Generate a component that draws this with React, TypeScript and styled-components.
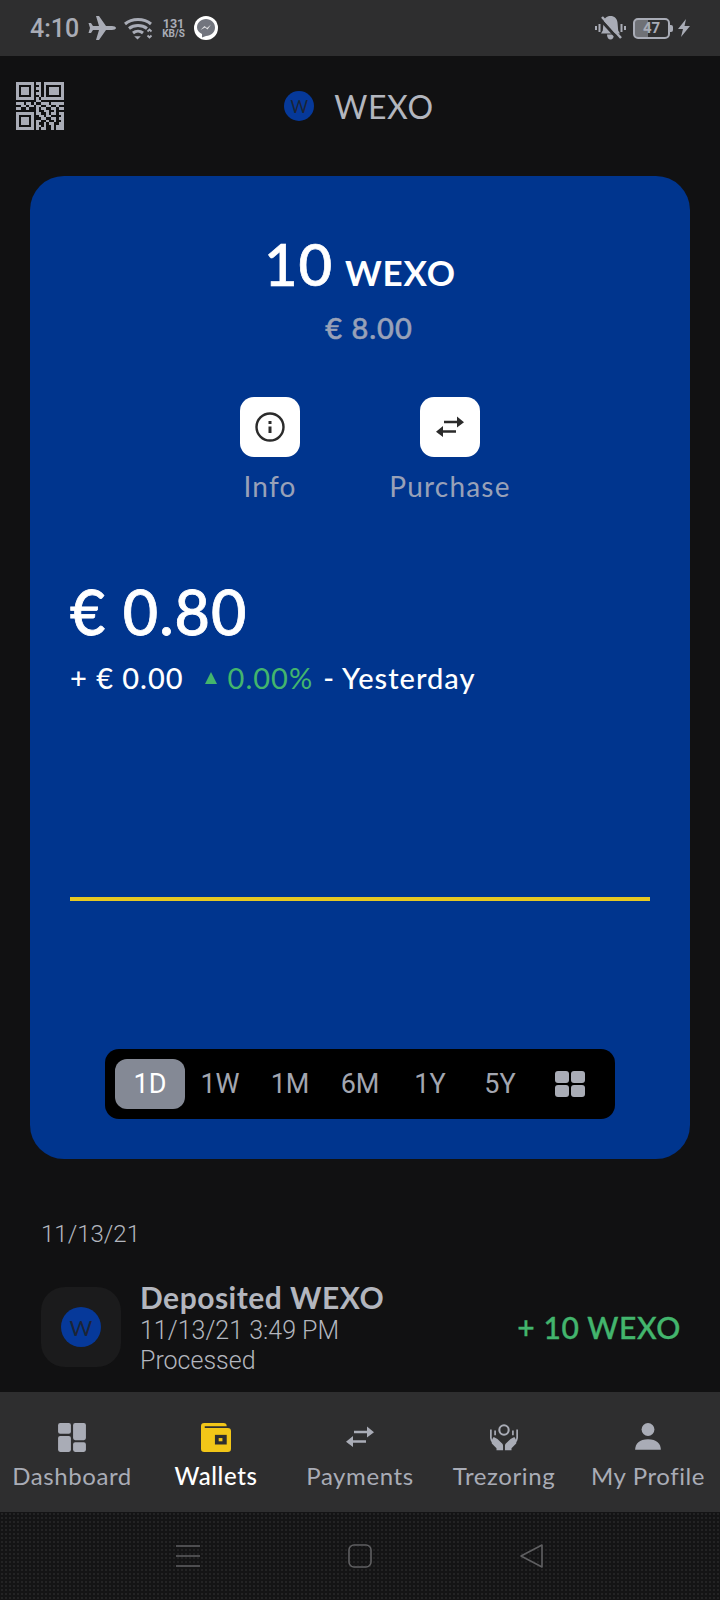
import React, { FC } from "react";
import styled, { createGlobalStyle } from "styled-components";

const GlobalStyle = createGlobalStyle`
  html, body {
    margin: 0;
    padding: 0;
    background: #111112;
  }
  * {
    box-sizing: border-box;
  }
`;

const BRAND_FONT = `Lato, "Open Sans", sans-serif`;
const SYSTEM_FONT = `Roboto, "Liberation Sans", sans-serif`;
const ICON_GREY = "#a9acb6";

const Screen = styled.div`
  width: 720px;
  height: 1600px;
  display: flex;
  flex-direction: column;
  overflow: hidden;
  background: #111112;
  font-family: ${BRAND_FONT};
`;

const StatusBar = styled.div`
  flex: none;
  height: 56px;
  padding: 0 30px;
  display: flex;
  align-items: center;
  justify-content: space-between;
  background: #2e2e2f;
  color: ${ICON_GREY};
  font-family: ${SYSTEM_FONT};
`;

const StatusGroup = styled.div`
  display: flex;
  align-items: center;
`;

const Clock = styled.span`
  font-size: 25px;
  font-weight: 500;
  width: 57px;
`;

const Speed = styled.span`
  margin: 0 7px 0 7px;
  width: 27px;
  display: flex;
  flex-direction: column;
  align-items: center;
  font-size: 12.5px;
  line-height: 11px;
  font-weight: 700;
  white-space: nowrap;

  small {
    font-size: 10px;
    line-height: 10px;
  }
`;

const MessengerBadge = styled.span`
  width: 24px;
  height: 24px;
  border-radius: 50%;
  background: #fff;
  display: flex;
  align-items: center;
  justify-content: center;
`;

const Battery = styled.span`
  position: relative;
  width: 37px;
  height: 21px;
  margin: 0 7px 0 7px;
  border: 2px solid ${ICON_GREY};
  border-radius: 5px;
  display: flex;
  align-items: center;
  justify-content: center;
  font-size: 15px;
  font-weight: 700;
  background: linear-gradient(90deg, #6f7176 0 38%, transparent 38%);

  &::after {
    content: "";
    position: absolute;
    right: -5px;
    top: 5px;
    width: 3px;
    height: 7px;
    border-radius: 0 2px 2px 0;
    background: ${ICON_GREY};
  }
`;

const Header = styled.div`
  flex: none;
  position: relative;
  height: 100px;
  display: flex;
  align-items: center;
  justify-content: center;
  gap: 20px;
  padding-right: 2px;
`;

const QrButton = styled.svg`
  position: absolute;
  left: 16px;
  top: 26px;
  width: 48px;
  height: 48px;
`;

const CoinLogo = styled.span<{ $size: number }>`
  width: ${(p) => p.$size}px;
  height: ${(p) => p.$size}px;
  border-radius: 50%;
  background: #06399a;
  color: #1c2436;
  display: flex;
  align-items: center;
  justify-content: center;
  font-size: ${(p) => Math.round(p.$size * 0.55)}px;
  font-weight: 400;
`;

const HeaderTitle = styled.span`
  color: #b3b6be;
  font-size: 32px;
  letter-spacing: 0.6px;
`;

const Card = styled.div`
  flex: none;
  height: 983px;
  margin: 20px 30px 0;
  padding: 55px 40px 40px;
  border-radius: 34px;
  background: #00358e;
  display: flex;
  flex-direction: column;
`;

const Balance = styled.div`
  text-align: center;
  color: #fff;
  font-size: 58px;
  line-height: 66px;
  font-weight: 500;
  letter-spacing: 0.8px;
  -webkit-text-stroke: 0.7px #fff;

  span {
    margin-left: 12px;
    font-size: 35px;
    font-weight: 700;
    -webkit-text-stroke: 0;
  }
`;

const FiatBalance = styled.div`
  margin-top: 6px;
  padding-left: 18px;
  text-align: center;
  color: #98a1b8;
  font-size: 29px;
  line-height: 34px;
  font-weight: 500;
  letter-spacing: 1px;
  -webkit-text-stroke: 0.5px #98a1b8;
`;

const Actions = styled.div`
  margin-top: 52px;
  display: flex;
  justify-content: center;
  gap: 60px;
`;

const Action = styled.div`
  width: 120px;
  display: flex;
  flex-direction: column;
  align-items: center;
  color: #98a1b8;
  font-size: 28px;
  line-height: 34px;
  letter-spacing: 1.2px;
  white-space: nowrap;
`;

const ActionIcon = styled.div`
  width: 60px;
  height: 60px;
  margin-bottom: 12px;
  border-radius: 14px;
  background: #fff;
  display: flex;
  align-items: center;
  justify-content: center;
`;

const Price = styled.div`
  margin-top: 74px;
  color: #fff;
  font-size: 61px;
  line-height: 70px;
  font-weight: 500;
  letter-spacing: 1px;
  -webkit-text-stroke: 0.8px #fff;
`;

const ChangeRow = styled.div`
  margin-top: 14px;
  display: flex;
  align-items: center;
  color: #fff;
  font-size: 29px;
  line-height: 34px;
  font-weight: 500;
  letter-spacing: 1px;
  white-space: nowrap;
`;

const UpTriangle = styled.span`
  width: 0;
  height: 0;
  margin: 0 11px 0 21px;
  border-left: 6.5px solid transparent;
  border-right: 6.5px solid transparent;
  border-bottom: 12px solid #43b56d;
`;

const Percent = styled.span`
  margin-right: 10px;
  color: #43b56d;
  font-weight: 400;
`;

const Chart = styled.div`
  flex: 1;
  display: flex;
  align-items: center;
`;

const FlatLine = styled.div`
  width: 100%;
  height: 4px;
  margin-top: 54px;
  background: #e7c822;
`;

const RangeBar = styled.div`
  align-self: center;
  width: 510px;
  height: 70px;
  padding: 10px;
  border-radius: 14px;
  background: #000;
  display: flex;
  align-items: stretch;
`;

const RangeItem = styled.div<{ $active?: boolean }>`
  width: 70px;
  border-radius: 12px;
  display: flex;
  align-items: center;
  justify-content: center;
  background: ${(p) => (p.$active ? "#848995" : "transparent")};
  color: ${(p) => (p.$active ? "#fff" : "#a3a6b0")};
  font-family: ${SYSTEM_FONT};
  font-size: 27px;
`;

const Activity = styled.div`
  flex: 1;
  min-height: 0;
  overflow: hidden;
  padding: 60px 41px 0;
`;

const ActivityDate = styled.div`
  color: #b3b6be;
  font-family: ${SYSTEM_FONT};
  font-size: 24px;
  font-weight: 300;
  line-height: 30px;
`;

const Transaction = styled.div`
  margin-top: 29px;
  display: flex;
  align-items: center;
`;

const TransactionIcon = styled.div`
  flex: none;
  width: 80px;
  height: 80px;
  border-radius: 24px;
  background: #1b1b1c;
  display: flex;
  align-items: center;
  justify-content: center;
`;

const TransactionText = styled.div`
  flex: 1;
  margin-left: 19px;
  display: flex;
  flex-direction: column;
`;

const TransactionTitle = styled.div`
  color: #b3b6be;
  font-size: 30px;
  line-height: 38px;
  font-weight: 700;
  letter-spacing: 0.5px;
`;

const TransactionLine = styled.div`
  color: #b3b6be;
  font-family: ${SYSTEM_FONT};
  font-weight: 300;
  font-size: 25px;
  line-height: 30px;
`;

const TransactionAmount = styled.div`
  margin-right: -2px;
  color: #43b56d;
  font-size: 30px;
  font-weight: 500;
  letter-spacing: 0.6px;
  -webkit-text-stroke: 0.4px #43b56d;
`;

const TabBar = styled.div`
  flex: none;
  height: 120px;
  display: grid;
  grid-template-columns: repeat(5, 144px);
  background: #2e2e2f;
`;

const Tab = styled.div<{ $active?: boolean }>`
  display: flex;
  flex-direction: column;
  align-items: center;
  padding-top: 30px;
  color: ${(p) => (p.$active ? "#fff" : "#a9acb6")};
  font-size: 24px;
  font-weight: ${(p) => (p.$active ? 500 : 400)};
  letter-spacing: 0.6px;
  white-space: nowrap;

  svg {
    width: 30px;
    height: 30px;
    margin-bottom: 9px;
  }
`;

const NavBar = styled.div`
  flex: none;
  height: 88px;
  display: flex;
  align-items: center;
  justify-content: center;
  gap: 148px;
  background-color: #141415;
  background-image: radial-gradient(#232324 1px, transparent 1px);
  background-size: 4px 4px;
`;

const NavIcon = styled.svg`
  width: 24px;
  height: 24px;
  fill: none;
  stroke: #5f5f61;
  stroke-width: 1.6;
`;

const QR_ROWS = [
  "1111111011011111111",
  "1000001001010000001",
  "1011101011010111101",
  "1011101001010111101",
  "1011101011010111101",
  "1000001001010000001",
  "1111111010111111111",
  "0000000011000000000",
  "1110110100111011111",
  "0011011011001100100",
  "1100100010110011011",
  "0000000010011001000",
  "1111111011001011011",
  "1000001001101100001",
  "1011101000110011011",
  "1011101011001001001",
  "1011101010010110011",
  "1000001011010010111",
  "1111111010110010111",
];

const QrIcon: FC = () => (
  <QrButton viewBox="0 0 19 19" shapeRendering="crispEdges" fill={ICON_GREY}>
    {QR_ROWS.map((row, y) =>
      row.split("").map((cell, x) => (cell === "1" ? <rect key={`${x}-${y}`} x={x} y={y} width={1} height={1} /> : null))
    )}
  </QrButton>
);

const SwapIcon: FC<{ color: string; size: number }> = ({ color, size }) => (
  <svg width={size} height={size} viewBox="0 0 30 30" fill={color}>
    <path d="M22 8.800V4.500l7 5.800-7 5.200v-4.300H9V8.800z" />
    <path d="M21 18.200H8V14l-7 5.800 7 5.200v-4.200h13z" />
  </svg>
);

const tabs = ["Dashboard", "Wallets", "Payments", "Trezoring", "My Profile"];

const tabIcons = [
  <svg key="dashboard" viewBox="0 0 28 28" fill={ICON_GREY}>
    <rect x="1" y="1" width="12" height="10" rx="2" />
    <rect x="15" y="1" width="12" height="16" rx="2" />
    <rect x="1" y="13" width="12" height="15" rx="2" />
    <rect x="15" y="19" width="12" height="9" rx="2" />
  </svg>,
  <svg key="wallet" viewBox="0 0 28 28">
    <path d="M3 1h18a3 3 0 0 1 3 3H3.500v1.500H25a3 3 0 0 1 3 3V25a3 3 0 0 1-3 3H3a3 3 0 0 1-3-3V4a3 3 0 0 1 3-3z" fill="#f2c618" />
    <rect x="13" y="12" width="11" height="9" fill="#2e2e2f" />
    <rect x="16.500" y="15" width="3.500" height="3" fill="#f2c618" />
  </svg>,
  <SwapIcon key="payments" color={ICON_GREY} size={30} />,
  <svg key="trezoring" viewBox="0 0 32 28" fill={ICON_GREY}>
    <circle cx="16" cy="6.500" r="5" fill="none" stroke={ICON_GREY} strokeWidth="2.200" />
    <path d="M2 6v9c0 2 1 3.500 3 5M6.500 7v5M30 6v9c0 2-1 3.500-3 5M25.500 7v5" fill="none" stroke={ICON_GREY} strokeWidth="1.800" />
    <path d="M5 14l4 2 5 5c.8.800 1 1.500 1 3v4H8v-2l-5-5c-.5-2 .2-5 2-7z" />
    <path d="M27 14l-4 2-5 5c-.8.800-1 1.500-1 3v4h7v-2l5-5c.5-2-.2-5-2-7z" />
  </svg>,
  <svg key="profile" viewBox="0 0 28 28" fill={ICON_GREY}>
    <circle cx="14" cy="7" r="6" />
    <path d="M2 26c0-6 4-10 12-10s12 4 12 10z" />
  </svg>,
];

const App: FC = () => (
  <Screen>
    <GlobalStyle />
    <StatusBar>
      <StatusGroup>
        <Clock>4:10</Clock>
        <svg width="29" height="24" viewBox="0 0 29 24" fill={ICON_GREY}>
          <path d="M29 12c0 1.300-2 2-4 2h-6L12 24H9l3-10H6l-2 3H1.500L3 12 1.500 7H4l2 3h6L9 0h3l7 10h6c2 0 4 .7 4 2z" />
        </svg>
        <svg style={{ marginLeft: 8 }} width="29" height="24" viewBox="0 0 29 24" fill="none" stroke={ICON_GREY} strokeWidth="3">
          <path d="M1 8c7-6 19-6 26 0" />
          <path d="M5 12.500c5-4 13-4 18 0" />
          <path d="M9 17c3-2.500 7-2.500 10 0" />
          <path d="M12 21h3l-1.500 1.500z" fill={ICON_GREY} strokeWidth="1.500" />
          <path d="M23.500 15.500l2-2 2 2M23.500 19.500l2 2 2-2" strokeWidth="1.800" />
        </svg>
        <Speed>
          131
          <small>KB/S</small>
        </Speed>
        <MessengerBadge>
          <svg width="20" height="20" viewBox="0 0 20 20">
            <path d="M10 1c5 0 9 3.600 9 8.500S15 18 10 18l-4 1.500V16C3 14.500 1 12.300 1 9.500 1 4.600 5 1 10 1z" fill="#72757e" />
            <path d="M4.500 12l4-4 2.500 2 4-3.500-3.500 5-2.500-2z" fill="#e4e4e6" />
          </svg>
        </MessengerBadge>
      </StatusGroup>
      <StatusGroup>
        <svg width="31" height="24" viewBox="0 0 31 24" fill={ICON_GREY}>
          <path d="M15.500 0c4 0 6.500 2.500 7 6.500l.7 8 1.800 3H6l1.800-3 .7-8C9 2.500 11.500 0 15.500 0z" />
          <path d="M12 18.500h7c0 3-1.500 5-3.500 5s-3.500-2-3.500-5z" />
          <path d="M1 10v4M4.500 8v8M26.500 8v8M30 10v4" stroke={ICON_GREY} strokeWidth="2" />
          <path d="M5 3l19 21" stroke="#2e2e2f" strokeWidth="3" />
          <path d="M7 1l19 21" stroke={ICON_GREY} strokeWidth="2.500" />
        </svg>
        <Battery>47</Battery>
        <svg style={{ marginLeft: 1 }} width="12" height="18" viewBox="0 0 12 18" fill={ICON_GREY}>
          <path d="M8 0L0 10h5l-2 8 9-11H6.500z" />
        </svg>
      </StatusGroup>
    </StatusBar>

    <Header>
      <QrIcon />
      <CoinLogo $size={30}>W</CoinLogo>
      <HeaderTitle>WEXO</HeaderTitle>
    </Header>

    <Card>
      <Balance>
        10<span>WEXO</span>
      </Balance>
      <FiatBalance>€ 8.00</FiatBalance>
      <Actions>
        <Action>
          <ActionIcon>
            <svg width="30" height="30" viewBox="0 0 30 30" fill="none" stroke="#2b2b2b" strokeWidth="2.400">
              <circle cx="15" cy="15" r="13.500" />
              <path d="M15 9v3M15 14.500v6.500" strokeWidth="3" />
            </svg>
          </ActionIcon>
          Info
        </Action>
        <Action>
          <ActionIcon>
            <SwapIcon color="#2b2b2b" size={30} />
          </ActionIcon>
          Purchase
        </Action>
      </Actions>

      <Price>€ 0.80</Price>
      <ChangeRow>
        + € 0.00
        <UpTriangle />
        <Percent>0.00%</Percent>- Yesterday
      </ChangeRow>

      <Chart>
        <FlatLine />
      </Chart>

      <RangeBar>
        <RangeItem $active>1D</RangeItem>
        <RangeItem>1W</RangeItem>
        <RangeItem>1M</RangeItem>
        <RangeItem>6M</RangeItem>
        <RangeItem>1Y</RangeItem>
        <RangeItem>5Y</RangeItem>
        <RangeItem>
          <svg width="30" height="26" viewBox="0 0 30 26" fill={ICON_GREY}>
            <rect x="0" y="0" width="14" height="12" rx="3" />
            <rect x="16" y="0" width="14" height="12" rx="3" />
            <rect x="0" y="14" width="14" height="12" rx="3" />
            <rect x="16" y="14" width="14" height="12" rx="3" />
          </svg>
        </RangeItem>
      </RangeBar>
    </Card>

    <Activity>
      <ActivityDate>11/13/21</ActivityDate>
      <Transaction>
        <TransactionIcon>
          <CoinLogo $size={40}>W</CoinLogo>
        </TransactionIcon>
        <TransactionText>
          <TransactionTitle>Deposited WEXO</TransactionTitle>
          <TransactionLine>11/13/21 3:49 PM</TransactionLine>
          <TransactionLine>Processed</TransactionLine>
        </TransactionText>
        <TransactionAmount>+ 10 WEXO</TransactionAmount>
      </Transaction>
    </Activity>

    <TabBar>
      {tabs.map((label, i) => (
        <Tab key={label} $active={label === "Wallets"}>
          {tabIcons[i]}
          {label}
        </Tab>
      ))}
    </TabBar>

    <NavBar>
      <NavIcon viewBox="0 0 24 24">
        <path d="M0 2h24M0 12h24M0 22h24" />
      </NavIcon>
      <NavIcon viewBox="0 0 24 24">
        <rect x="1" y="1" width="22" height="22" rx="5" />
      </NavIcon>
      <NavIcon viewBox="0 0 24 24">
        <path d="M1 12L22 1v22z" strokeLinejoin="round" />
      </NavIcon>
    </NavBar>
  </Screen>
);

export default App;
